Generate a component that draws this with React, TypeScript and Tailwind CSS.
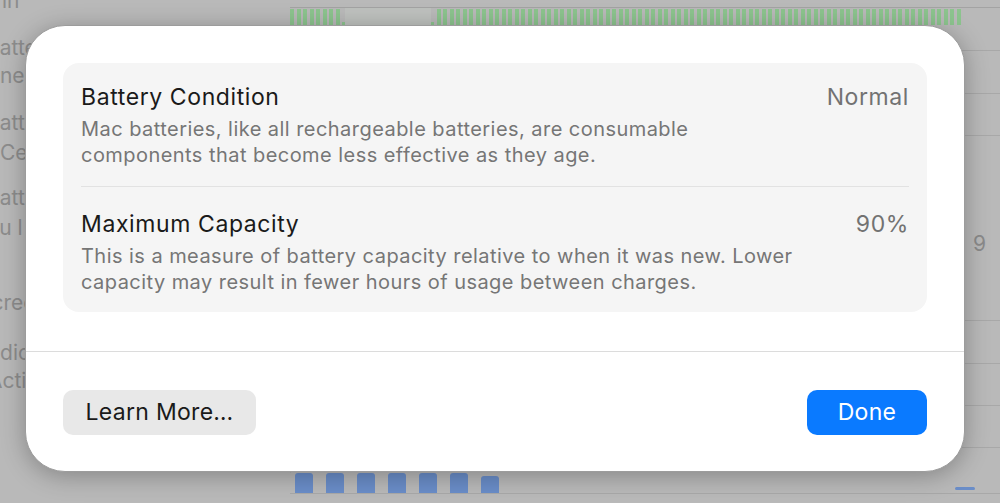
const GREEN_LEFT = Array.from({ length: 8 });
const GREEN_RIGHT = Array.from({ length: 81 });
const BLUE = [20, 20, 20, 20, 20, 20, 17];

const SIDE = [
  { text: 'in', mt: 'mt-[-12px] ml-[2px]' },
  { text: 'Battery Health', mt: 'mt-[21px] -ml-[14px]' },
  { text: 'General', mt: 'mt-[2px] -ml-[28px]' },
  { text: 'Battery Health', mt: 'mt-[21px] -ml-[14px]' },
  { text: 'Ce', mt: 'mt-[4px]' },
  { text: 'Battery Level', mt: 'mt-[19px] -ml-[14px]' },
  { text: 'You l', mt: 'mt-[4px] -ml-[26px]' },
  { text: 'Screen On', mt: 'mt-[49px] -ml-[22px]' },
  { text: 'Indicator', mt: 'mt-[24px] -ml-[18px]' },
  { text: 'Activity', mt: 'mt-[2px] -ml-[12px]' },
];

const GRID_Y = [50, 93, 135, 320, 363, 405, 447];

function Row({
  title,
  value,
  lines,
  className,
}: {
  title: string;
  value: string;
  lines: string[];
  className: string;
}) {
  return (
    <div className={`flex items-start justify-between ${className}`}>
      <div>
        <div className="text-[23px] leading-[26px] tracking-[0.6px] text-[#1a1a1a]">{title}</div>
        <div className="mt-[6px] text-[20px] leading-[26px] tracking-[0.45px] text-[#767676]">
          {lines.map((l) => (
            <div key={l}>{l}</div>
          ))}
        </div>
      </div>
      <div className="text-[23px] leading-[26px] tracking-[0.6px] text-[#727272]">{value}</div>
    </div>
  );
}

export default function App() {
  return (
    <div
      className="relative h-[503px] w-[1000px] overflow-hidden bg-[#b9b9b9]"
      style={{ fontFamily: 'Inter, "Noto Sans", sans-serif' }}
    >
      {/* Dimmed settings window behind the sheet */}
      <div className="flex h-full">
        {/* Sidebar labels, clipped at left */}
        <div className="flex w-[290px] flex-col overflow-hidden">
          {SIDE.map((s, i) => (
            <div
              key={i}
              className={`whitespace-nowrap text-[21px] leading-[26px] text-[#8c8c8c] ${s.mt}`}
            >
              {s.text}
            </div>
          ))}
        </div>

        {/* Chart area */}
        <div className="flex flex-1 flex-col">
          <div className="h-[8px] border-b border-[#a3a3a3]" />
          <div className="flex h-[17px] items-end">
            <div className="flex items-end gap-[2.5px]">
              {GREEN_LEFT.map((_, i) => (
                <div key={i} className="h-[16px] w-[4px] bg-[#8cc48e]" />
              ))}
              <div className="h-[3px] w-[3px] bg-[#8cc48e]" />
            </div>
            <div className="h-full w-[86px] bg-[#bec1be]" />
            <div className="flex items-end gap-[2.5px]">
              <div className="h-[3px] w-[3px] bg-[#8cc48e]" />
              {GREEN_RIGHT.map((_, i) => (
                <div key={i} className="h-[16px] w-[4px] bg-[#8cc48e]" />
              ))}
            </div>
          </div>

          <div className="relative flex-1 border-l border-[#b0b0b0]">
            {GRID_Y.map((y) => (
              <div
                key={y}
                className="absolute right-0 left-0 h-px bg-[#a8a8a8]"
                style={{ top: y - 25 }}
              />
            ))}
            <div className="absolute top-[203px] right-[14px] text-[21px] text-[#8a8a8a]">9</div>
          </div>

          <div className="flex h-[20px] items-end justify-between pr-[25px]">
            <div className="ml-[5px] flex items-end gap-[13px]">
              {BLUE.map((h, i) => (
                <div key={i} className="w-[18px] rounded-t-[3px] bg-[#6a8dc8]" style={{ height: h }} />
              ))}
            </div>
            <div className="mb-[3px] h-[3px] w-[20px] rounded bg-[#6a8dc8]" />
          </div>
          <div className="h-[10px] border-t border-[#a8a8a8]" />
        </div>
      </div>

      {/* Battery sheet */}
      <div className="absolute top-[25px] left-[25px] flex h-[447px] w-[940px] flex-col rounded-[40px] border border-[#9c9c9c] bg-white shadow-[0_4px_24px_rgba(0,0,0,0.28)]">
        <div className="px-[37px] pt-[37px]">
          <div className="rounded-[16px] bg-[#f5f5f5] px-[18px]">
            <Row
              title="Battery Condition"
              value="Normal"
              lines={[
                'Mac batteries, like all rechargeable batteries, are consumable',
                'components that become less effective as they age.',
              ]}
              className="pt-[21px] pb-[18px]"
            />
            <div className="h-px bg-[#e2e2e2]" />
            <Row
              title="Maximum Capacity"
              value="90%"
              lines={[
                'This is a measure of battery capacity relative to when it was new. Lower',
                'capacity may result in fewer hours of usage between charges.',
              ]}
              className="pt-[24px] pb-[17px]"
            />
          </div>
        </div>

        <div className="mt-[39px] h-px bg-[#dcdcdc]" />

        <div className="flex items-center justify-between px-[37px] pt-[38px]">
          <button className="h-[45px] w-[193px] rounded-[10px] bg-[#e8e8e8] text-[23px] tracking-[0.3px] text-[#1a1a1a]">
            Learn More…
          </button>
          <button className="h-[45px] w-[120px] rounded-[10px] bg-[#0a7aff] text-[23px] tracking-[0.3px] text-white">
            Done
          </button>
        </div>
      </div>
    </div>
  );
}
